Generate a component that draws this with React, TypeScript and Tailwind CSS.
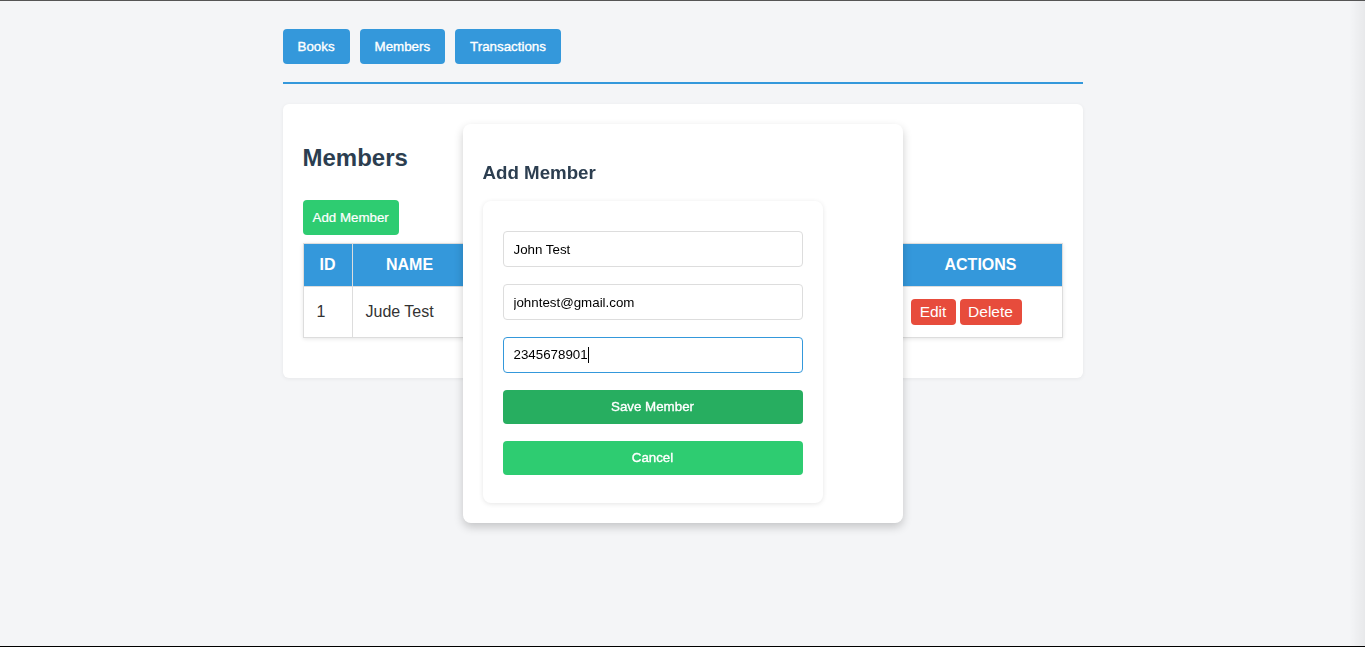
export default function App() {
  const members = [{ id: 1, name: 'Jude Test', email: 'jude@test.com', phone: '1234567890' }];

  return (
    <div className="relative h-[647px] overflow-hidden border-t border-b border-t-[#555555] border-b-black bg-[#f4f5f7] font-['Liberation_Sans',Arial,sans-serif]">
      <div className="mx-auto w-[800px] pt-[28px]">
        {/* NAV */}
        <nav className="flex gap-[10px]">
          {['Books', 'Members', 'Transactions'].map((label) => (
            <button
              key={label}
              className="h-[35px] rounded-[4px] bg-[#3498db] px-[15px] text-[13.33px] font-medium text-white [-webkit-text-stroke:0.35px_white]"
            >
              {label}
            </button>
          ))}
        </nav>
        <div className="mt-[18px] h-[2px] bg-[#3498db]" />

        {/* MEMBERS CARD */}
        <section className="mt-[20px] rounded-[6px] bg-white p-[20px] shadow-[0_1px_4px_rgba(0,0,0,0.06)]">
          <h2 className="mt-[20px] mb-[28px] text-[24px] leading-[28px] font-bold text-[#2c3e50]">Members</h2>
          <button className="h-[35px] rounded-[4px] bg-[#2ecc71] px-[10px] text-[13.33px] text-white [-webkit-text-stroke:0.2px_white]">
            Add Member
          </button>
          <table className="mt-[8px] mb-[20px] w-full border-collapse text-[16px] shadow-[0_1px_4px_rgba(0,0,0,0.1)]">
            <thead>
              <tr className="bg-[#3498db] text-white">
                <th className="h-[43px] w-[49px] border border-[#dddddd] font-bold">ID</th>
                <th className="w-[115px] border border-[#dddddd] font-bold">NAME</th>
                <th className="border border-[#dddddd] font-bold">EMAIL</th>
                <th className="border border-[#dddddd] font-bold">PHONE</th>
                <th className="w-[163px] border border-[#dddddd] font-bold">ACTIONS</th>
              </tr>
            </thead>
            <tbody>
              {members.map((m) => (
                <tr key={m.id} className="text-[#333333]">
                  <td className="h-[51px] border border-[#dddddd] px-[13px]">{m.id}</td>
                  <td className="border border-[#dddddd] px-[13px]">{m.name}</td>
                  <td className="border border-[#dddddd] px-[13px]">{m.email}</td>
                  <td className="border border-[#dddddd] px-[13px]">{m.phone}</td>
                  <td className="border border-[#dddddd] px-[11px]">
                    <div className="flex gap-[4px]">
                      <button className="h-[26px] w-[45px] rounded-[4px] bg-[#e74c3c] text-[15.5px] text-white">Edit</button>
                      <button className="h-[26px] w-[62px] rounded-[4px] bg-[#e74c3c] text-[15.5px] text-white">Delete</button>
                    </div>
                  </td>
                </tr>
              ))}
            </tbody>
          </table>
        </section>
      </div>

      {/* MODAL */}
      <div className="fixed top-[124px] left-1/2 h-[399px] w-[440px] -translate-x-1/2 rounded-[8px] bg-white p-[20px] shadow-[0_4px_10px_rgba(0,0,0,0.2)]">
        <h3 className="mt-[18px] mb-[17px] text-[18.72px] leading-[22px] font-bold text-[#2c3e50]">Add Member</h3>
        <div className="flex w-[340px] flex-col gap-[17px] rounded-[8px] bg-white px-[20px] pt-[30px] pb-[28px] shadow-[0_1px_5px_rgba(0,0,0,0.1)]">
          <input
            readOnly
            value="John Test"
            className="h-[36px] rounded-[4px] border border-[#dddddd] px-[10px] text-[13.33px] text-black outline-none"
          />
          <input
            readOnly
            value="johntest@gmail.com"
            className="h-[36px] rounded-[4px] border border-[#dddddd] px-[10px] text-[13.33px] text-black outline-none"
          />
          <div className="flex h-[36px] items-center rounded-[4px] border border-[#3498db] px-[10px] text-[13.33px] text-black">
            <span>2345678901</span>
            <span className="h-[16px] w-px bg-black" />
          </div>
          <button className="h-[34px] rounded-[4px] bg-[#27ae60] text-[13.33px] font-medium text-white [-webkit-text-stroke:0.35px_white]">
            Save Member
          </button>
          <button className="h-[34px] rounded-[4px] bg-[#2ecc71] text-[13.33px] font-medium text-white [-webkit-text-stroke:0.35px_white]">
            Cancel
          </button>
        </div>
      </div>

      <div className="pointer-events-none absolute top-0 right-0 bottom-0 w-[16px] bg-gradient-to-r from-transparent to-black/5" />
    </div>
  );
}
